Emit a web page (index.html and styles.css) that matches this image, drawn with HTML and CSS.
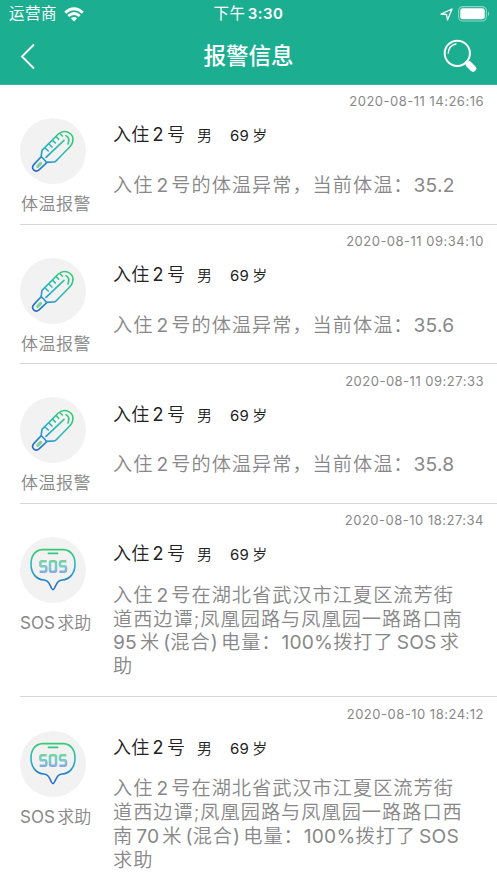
FILE: index.html
```html
<!DOCTYPE html>
<html lang="zh-CN">
<head>
<meta charset="utf-8">
<title>报警信息</title>
<link rel="stylesheet" href="styles.css">
</head>
<body>
<svg class="defs" width="0" height="0" aria-hidden="true">
  <defs>
    <linearGradient id="thermo-ink" gradientUnits="userSpaceOnUse" x1="170" y1="65" x2="85" y2="185"><stop offset="0" stop-color="#35cb72"/><stop offset=".5" stop-color="#27b6c2"/><stop offset="1" stop-color="#2867c9"/></linearGradient>
    <linearGradient id="sos-ink" gradientUnits="userSpaceOnUse" x1="130" y1="58" x2="130" y2="180"><stop offset="0" stop-color="#36cb70"/><stop offset=".4" stop-color="#25b9c0"/><stop offset="1" stop-color="#2562c8"/></linearGradient>
    <linearGradient id="sos-text" gradientUnits="userSpaceOnUse" x1="130" y1="90" x2="130" y2="130"><stop offset="0" stop-color="#72d596"/><stop offset=".5" stop-color="#7bc9cf"/><stop offset="1" stop-color="#86a9dc"/></linearGradient>
    <symbol id="thermo" viewBox="31 24 198 198">
      <g fill="none" stroke="url(#thermo-ink)" stroke-width="4.8" stroke-linecap="round" stroke-linejoin="round">
        <path d="M94 142L97 121L146 72C166 55 195 70 189 95C188 101 185 106 180 111L139 153Q136 156 131 156L110 157"/>
        <path d="M92 143L73 163C62 175 76 190 89 179L109 160Q112 157 108 154L97 142Q94 140 92 143Z"/>
        <path d="M109 142L163 91M106 114L116 123M118 102L127 111M129 91L137 99M140 80L147 88M152 72L158 78M169 77Q182 84 175 102"/>
      </g>
      <path d="M84 169L93 160" stroke="#7bd29c" stroke-width="9" stroke-linecap="round"/>
    </symbol>
    <symbol id="sos" viewBox="31 22 198 198">
      <g fill="none" stroke="url(#sos-ink)" stroke-width="4.8" stroke-linecap="round" stroke-linejoin="round">
        <path d="M98 60H162C184 61 196 80 196 103C196 132 180 149 157 151C146 152 143 157 139 166Q133 180 130 180Q127 180 121 166C117 157 114 152 103 151C80 149 64 132 64 103C64 80 76 61 98 60Z"/>
        <path d="M116 71H144"/>
      </g>
      <g fill="none" stroke="url(#sos-text)" stroke-width="7.500" stroke-linejoin="round">
        <path d="M111 95H97Q92 95 92 100V105Q92 110 97 110H106Q110 110 110 115V121Q110 126 105 126H90"/>
        <rect x="121" y="95" width="18" height="31" rx="4"/>
        <path d="M170 95H156Q151 95 151 100V105Q151 110 156 110H165Q169 110 169 115V121Q169 126 164 126H149"/>
      </g>
    </symbol>
  </defs>
</svg>
<header class="top">
  <div class="status">
    <div class="carrier"><span>运营商</span>
      <svg width="20" height="15" viewBox="0 0 20 15"><g fill="none" stroke="#fff" stroke-width="2.8"><path d="M1.2 5.6Q10 -2.2 18.8 5.6M4.3 9Q10 4 15.700 9"/></g><path d="M6.900 11.300Q10 8.900 13.100 11.300L10 14.500Z" fill="#fff"/></svg>
    </div>
    <div class="clock">下午<span>3:30</span></div>
    <div class="power">
      <svg width="13" height="13" viewBox="0 0 13 13"><path d="M1 6L12 1L7.500 12L6.500 6.500Z" fill="none" stroke="#fff" stroke-width="1.300" stroke-linejoin="round"/></svg>
      <svg width="32" height="16" viewBox="0 0 32 16"><rect x=".6" y=".6" width="27.800" height="14.400" rx="4.200" fill="none" stroke="#8ed7c4" stroke-width="1.100"/><rect x="2.300" y="2.300" width="24.400" height="11" rx="2.500" fill="#fff"/><path d="M30 5.300Q32.400 7.800 30 10.300Z" fill="#8ed7c4"/></svg>
    </div>
  </div>
  <nav class="bar">
    <svg class="back" width="16" height="27" viewBox="0 0 16 27"><path d="M14 1.500L2 13.500L14 25.500" fill="none" stroke="#fff" stroke-width="1.900"/></svg>
    <h1>报警信息</h1>
    <svg class="search" width="34" height="34" viewBox="0 0 34 34"><g fill="none" stroke="#fff" stroke-linecap="round"><circle cx="14.300" cy="14.300" r="12.600" stroke-width="2"/><path d="M5.200 14.300Q5.600 6.600 13 5" stroke-width="1.300"/><path d="M23.200 23.200L26 26" stroke-width="2.500"/><path d="M26 25.500L30 29.500" stroke-width="6.500"/></g></svg>
  </nav>
</header>
<main class="list">
  <article class="item">
    <div class="kind"><svg class="badge"><use href="#thermo"/></svg><span>体温报警</span></div>
    <div class="info"><time>2020-08-11 14:26:16</time>
      <div class="person"><b>入住<i>2</i>号</b><span class="sex">男</span><span><u>69</u><em>岁</em></span></div>
      <p>入住<i>2</i>号的体温异常，当前体温：<u>35.2</u></p></div>
  </article>
  <article class="item">
    <div class="kind"><svg class="badge"><use href="#thermo"/></svg><span>体温报警</span></div>
    <div class="info"><time>2020-08-11 09:34:10</time>
      <div class="person"><b>入住<i>2</i>号</b><span class="sex">男</span><span><u>69</u><em>岁</em></span></div>
      <p>入住<i>2</i>号的体温异常，当前体温：<u>35.6</u></p></div>
  </article>
  <article class="item">
    <div class="kind"><svg class="badge"><use href="#thermo"/></svg><span>体温报警</span></div>
    <div class="info"><time>2020-08-11 09:27:33</time>
      <div class="person"><b>入住<i>2</i>号</b><span class="sex">男</span><span><u>69</u><em>岁</em></span></div>
      <p>入住<i>2</i>号的体温异常，当前体温：<u>35.8</u></p></div>
  </article>
  <article class="item long">
    <div class="kind"><svg class="badge"><use href="#sos"/></svg><span><u>SOS</u><em>求助</em></span></div>
    <div class="info"><time>2020-08-10 18:27:34</time>
      <div class="person"><b>入住<i>2</i>号</b><span class="sex">男</span><span><u>69</u><em>岁</em></span></div>
      <p>入住<i>2</i>号在湖北省武汉市江夏区流芳街<br>道西边谭;凤凰园路与凤凰园一路路口南<br><u>95</u><em>米</em><u class="gap">(</u>混合<u>)</u><em>电</em>量：<u>100%</u>拨打了<i>SOS</i>求<br>助</p></div>
  </article>
  <article class="item long">
    <div class="kind"><svg class="badge"><use href="#sos"/></svg><span><u>SOS</u><em>求助</em></span></div>
    <div class="info"><time>2020-08-10 18:24:12</time>
      <div class="person"><b>入住<i>2</i>号</b><span class="sex">男</span><span><u>69</u><em>岁</em></span></div>
      <p>入住<i>2</i>号在湖北省武汉市江夏区流芳街<br>道西边谭;凤凰园路与凤凰园一路路口西<br>南<i>70</i>米<u class="gap">(</u>混合<u>)</u><em>电</em>量：<u>100%</u>拨打了<u class="gap">SOS</u><br>求助</p></div>
  </article>
</main>
</body>
</html>
```
FILE: styles.css
```css
* { box-sizing: border-box; }
html { overflow: hidden; }
body {
  margin: 0;
  height: 883px;
  overflow: hidden;
  background: #fff;
  color: #222;
  font-family: Inter, "Noto Sans CJK SC", sans-serif;
}
svg { display: block; flex: none; }
.defs { position: absolute; }
i, em, u { font-style: normal; text-decoration: none; }
i, u { font-weight: 400; }

.top { height: 85px; background: #1cae91; color: #fff; border-bottom: 1px solid #36b9a0; }
.status {
  height: 28px;
  display: grid;
  grid-template-columns: 1fr auto 1fr;
  align-items: center;
  padding: 0 7px 0 9px;
  font-size: 15.5px;
  line-height: 28px;
}
.carrier, .power { display: flex; align-items: center; }
.carrier { gap: 7px; letter-spacing: .5px; }
.clock { font-weight: 400; letter-spacing: .5px; margin-right: 2px; }
.clock span { font-weight: 600; font-size: 15px; margin-left: 2px; }
.power { justify-content: flex-end; gap: 5px; }
.bar {
  height: 56px;
  display: grid;
  grid-template-columns: 1fr auto 1fr;
  align-items: center;
  padding: 0 20px;
}
.bar h1 { margin: 0; font-size: 22.5px; line-height: 32px; font-weight: 500; }
.search { justify-self: end; }

.item {
  height: 139.6px;
  margin-left: 20px;
  display: flex;
  border-bottom: 1px solid #d7d7d7;
}
.item.long { height: 193.6px; }
.kind {
  width: 93px;
  padding-top: 33.3px;
  color: #888;
  font-size: 17px;
  line-height: 24px;
  letter-spacing: .5px;
  font-weight: 350;
  white-space: nowrap;
}
.kind span { display: block; margin: 8px 0 0 1px; }
.kind em { margin-left: 2px; }
.long .kind span { letter-spacing: .1px; margin-left: 0; }
.badge { width: 66px; height: 66px; border-radius: 50%; background: #f2f2f2; }
.info { flex: 1; min-width: 0; }
time {
  display: block;
  padding: 7.4px 13px 0 0;
  text-align: right;
  font-size: 13px;
  line-height: 18px;
  letter-spacing: .5px;
  color: #888;
}
.person {
  height: 28px;
  margin-top: 11px;
  display: flex;
  align-items: baseline;
  font-size: 15px;
  line-height: 28px;
  font-weight: 350;
}
.person b { font-size: 18px; font-weight: 350; letter-spacing: .3px; width: 84px; }
.person b i { margin: 0 3px; }
.person .sex { width: 33px; }
.person em { margin-left: 3px; }
.person span { letter-spacing: .3px; }
p {
  margin: 24.8px 0 0;
  font-size: 19.2px;
  line-height: 23.8px;
  letter-spacing: 1px;
  font-weight: 350;
  color: #888;
  white-space: nowrap;
}
.long p { margin-top: 15.6px; }
p i { margin: 0 3px; letter-spacing: .2px; }
p u { letter-spacing: .2px; }
p em { margin-left: 3px; }
.gap { margin-left: 3px; }
```
